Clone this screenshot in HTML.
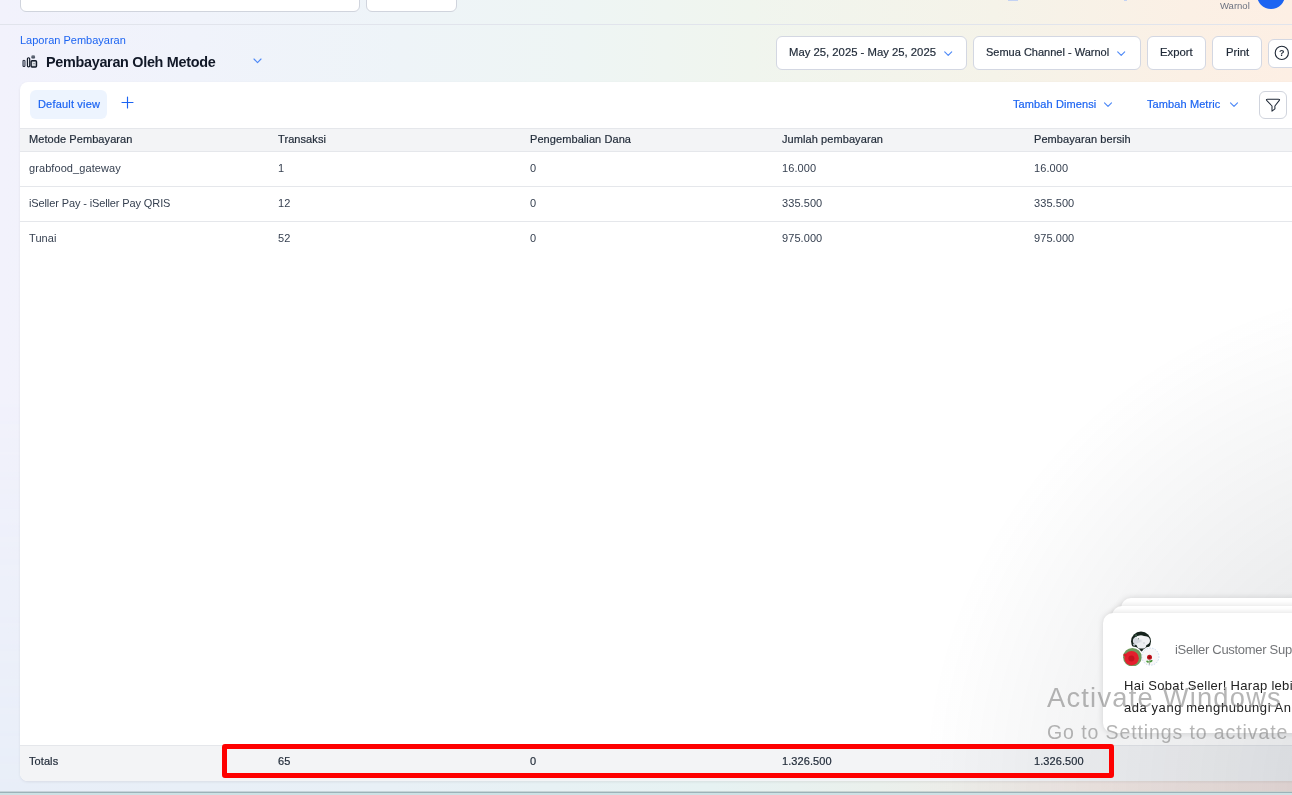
<!DOCTYPE html>
<html lang="id">
<head>
<meta charset="utf-8">
<title>Pembayaran Oleh Metode</title>
<style>
*{box-sizing:border-box;margin:0;padding:0}
html,body{width:1292px;height:795px;overflow:hidden}
body{position:relative;font-family:"Liberation Sans",sans-serif;color:#1f2937;
background:linear-gradient(90deg,#f2f2fc 0%,#f0f3fb 15%,#eef4f8 31%,#eef5f4 45%,#f0f5ee 58%,#f5f3e9 77%,#fbf0e5 92%,#fdefe4 100%);}
.abs{position:absolute}
.t{display:inline-block;will-change:transform}
svg{position:absolute;overflow:visible}
#topline{left:0;top:24px;width:1292px;height:1px;background:#e1e4ec}
.box{position:absolute;background:#fff;border:1px solid #d0d4dd;border-radius:6px}
#crumb{will-change:transform;left:20px;top:34px;font-size:11px;color:#1c64f2;line-height:13px;white-space:nowrap}
#title{will-change:transform;left:46px;top:53px;font-size:14.4px;font-weight:700;color:#111827;line-height:18px;white-space:nowrap;letter-spacing:-.3px}
.btn{position:absolute;top:36px;height:34px;background:#fff;border:1px solid #d3d7e2;border-radius:6px;font-size:11.3px;color:#1f2937;line-height:31px;white-space:nowrap;padding-left:12px;-webkit-text-stroke:.2px #1f2937}
#card{left:20px;top:82px;width:1290px;height:699px;background:#fff;border-radius:8px;box-shadow:0 1px 3px rgba(0,0,0,.08)}
#pill{left:10px;top:8px;width:77px;height:29px;border-radius:6px;background:#edf4fe;color:#1c64f2;font-size:11px;line-height:29px;text-align:center;padding-left:1px;letter-spacing:.18px;-webkit-text-stroke:.2px #1c64f2}
.lnk{will-change:transform;position:absolute;top:16px;font-size:11px;color:#1c64f2;line-height:13px;white-space:nowrap;letter-spacing:.1px;-webkit-text-stroke:.2px #1c64f2}
#thead{left:0;top:46px;width:1290px;height:24px;background:#f3f4f6;border-top:1px solid #e5e7eb;border-bottom:1px solid #e5e7eb}
.row{position:absolute;left:0;width:1290px;height:35px;border-bottom:1px solid #e5e7eb}
.c{will-change:transform;position:absolute;font-size:11px;line-height:13px;white-space:nowrap;color:#374151;letter-spacing:.08px}
.h{color:#1f2937;-webkit-text-stroke:.2px #1f2937}
#tfoot{left:0;top:663px;width:1290px;height:36px;background:#f3f4f6;border-top:1px solid #e5e7eb;border-radius:0 0 8px 8px}
#red{left:222px;top:744px;width:892px;height:34px;border:5px solid #fe0000;border-radius:3px}
.chat{position:absolute;background:#fff;border-radius:10px;box-shadow:0 0 6px rgba(0,0,0,.14)}
.wm{will-change:transform;position:absolute;white-space:nowrap;color:rgba(120,120,120,.55);font-family:"Liberation Sans",sans-serif}
</style>
</head>
<body>
<div class="abs" style="left:0;top:0;width:1292px;height:791px;background:linear-gradient(90deg,#e8eef8 0%,#e8f0f6 30%,#e6f2f2 55%,#eaf0ec 68%,#f3e9e5 85%,#f5e7e3 100%);-webkit-mask-image:linear-gradient(180deg,transparent 0,transparent 50%,#000 100%);mask-image:linear-gradient(180deg,transparent 0,transparent 50%,#000 100%)"></div>
<div class="box" style="left:20px;top:-20px;width:340px;height:32px"></div>
<div class="box" style="left:366px;top:-20px;width:91px;height:32px"></div>
<div class="abs" style="will-change:transform;left:1220px;top:0;font-size:9.5px;line-height:11px;color:#6b7280">Warnol</div>
<div class="abs" style="left:1257px;top:-19px;width:28px;height:28px;border-radius:50%;background:#1c64f2"></div>
<div class="abs" style="left:1008px;top:0;width:10px;height:1px;background:#c3d2f3"></div>
<div class="abs" style="left:1124px;top:0;width:3px;height:1px;background:#c3d2f3"></div>
<div class="abs" id="topline"></div>

<div class="abs" id="crumb">Laporan Pembayaran</div>
<svg style="left:22px;top:55px" width="16" height="13" viewBox="0 0 16 13">
  <rect x="0.1" y="4.8" width="3.7" height="7.3" rx="1.8" fill="#7c8190"/>
  <ellipse cx="1.95" cy="5.5" rx="1.2" ry=".6" fill="#111827" opacity=".75"/>
  <ellipse cx="1.95" cy="11.4" rx="1.2" ry=".6" fill="#111827" opacity=".75"/>
  <rect x="5.4" y="2.7" width="2.3" height="9.1" rx="1.15" fill="#e5e7eb" stroke="#111827" stroke-width="1.15"/>
  <rect x="9.1" y="5.7" width="5.4" height="6.3" rx="1" fill="#c9cdd5" stroke="#111827" stroke-width="1.4"/>
  <rect x="10.6" y="7.3" width="2.4" height="2.8" fill="#f3f4f6"/>
  <rect x="11.4" y="8" width="1.2" height="1.4" fill="#6b7280"/>
  <rect x="9.3" y="0.3" width="3.8" height="3.5" rx="1.4" fill="#6b7280"/>
  <path d="M9.6 2.2 H12.8" stroke="#374151" stroke-width=".8"/>
</svg>
<div class="abs" id="title">Pembayaran Oleh Metode</div>
<svg style="left:253px;top:58px" width="9" height="6" viewBox="0 0 9 6"><path d="M1 1 L4.5 4.6 L8 1" fill="none" stroke="#4f8af7" stroke-width="1.15" stroke-linecap="round" stroke-linejoin="round"/></svg>

<div class="btn" style="left:776px;width:191px"><span class="t">May 25, 2025 - May 25, 2025</span></div>
<svg style="left:944px;top:51px" width="9" height="6" viewBox="0 0 9 6"><path d="M0.7 0.8 L4.2 4.4 L7.7 0.8" fill="none" stroke="#4f8af7" stroke-width="1.15" stroke-linecap="round" stroke-linejoin="round"/></svg>
<div class="btn" style="left:973px;width:168px;font-size:11px;padding-left:12px"><span class="t">Semua Channel - Warnol</span></div>
<svg style="left:1117px;top:51px" width="9" height="6" viewBox="0 0 9 6"><path d="M0.7 0.8 L4.2 4.4 L7.7 0.8" fill="none" stroke="#4f8af7" stroke-width="1.15" stroke-linecap="round" stroke-linejoin="round"/></svg>
<div class="btn" style="left:1147px;width:59px"><span class="t">Export</span></div>
<div class="btn" style="left:1212px;width:50px;padding-left:12.5px"><span class="t">Print</span></div>
<div class="btn" style="left:1268px;top:39px;width:40px;height:29px"></div>
<svg style="left:1274px;top:45px;will-change:transform" width="16" height="16" viewBox="0 0 16 16">
  <circle cx="7.8" cy="7.9" r="6.6" fill="none" stroke="#1f2937" stroke-width="1.1"/>
  <text x="7.8" y="11.1" font-size="9" font-weight="700" text-anchor="middle" fill="#1f2937" font-family="Liberation Sans, sans-serif">?</text>
</svg>

<div class="abs" id="card">
  <div class="abs" id="pill"><span class="t">Default view</span></div>
  <svg style="left:101px;top:14px" width="13" height="13" viewBox="0 0 13 13"><path d="M6.5 1 V12 M1 6.5 H12" fill="none" stroke="#1c64f2" stroke-width="1.15" stroke-linecap="round"/></svg>
  <div class="lnk" style="left:993px">Tambah Dimensi</div>
  <svg style="left:1084px;top:20px" width="9" height="6" viewBox="0 0 9 6"><path d="M0.5 0.8 L4 4.4 L7.5 0.8" fill="none" stroke="#4f8af7" stroke-width="1.15" stroke-linecap="round" stroke-linejoin="round"/></svg>
  <div class="lnk" style="left:1127px">Tambah Metric</div>
  <svg style="left:1210px;top:20px" width="9" height="6" viewBox="0 0 9 6"><path d="M0.5 0.8 L4 4.4 L7.5 0.8" fill="none" stroke="#4f8af7" stroke-width="1.15" stroke-linecap="round" stroke-linejoin="round"/></svg>
  <div class="box" style="left:1239px;top:9px;width:28px;height:28px;border-radius:6px"></div>
  <svg style="left:1245px;top:16px" width="16" height="14" viewBox="0 0 16 14"><path d="M2.6 1.2 H13.4 Q15.3 1.2 14.1 2.7 L9.9 8 V10.8 L7 13.1 V8 L1.9 2.7 Q0.7 1.2 2.6 1.2 Z" fill="none" stroke="#1f2937" stroke-width="1.05" stroke-linejoin="round"/></svg>
  <div class="abs" id="thead">
    <div class="c h" style="left:9px;top:4px">Metode Pembayaran</div>
    <div class="c h" style="left:258px;top:4px">Transaksi</div>
    <div class="c h" style="left:510px;top:4px">Pengembalian Dana</div>
    <div class="c h" style="left:762px;top:4px">Jumlah pembayaran</div>
    <div class="c h" style="left:1014px;top:4px">Pembayaran bersih</div>
  </div>
  <div class="row" style="top:70px">
    <div class="c" style="left:9px;top:10px">grabfood_gateway</div>
    <div class="c" style="left:258px;top:10px">1</div>
    <div class="c" style="left:510px;top:10px">0</div>
    <div class="c" style="left:762px;top:10px">16.000</div>
    <div class="c" style="left:1014px;top:10px">16.000</div>
  </div>
  <div class="row" style="top:105px">
    <div class="c" style="left:9px;top:10px;letter-spacing:-.12px">iSeller Pay - iSeller Pay QRIS</div>
    <div class="c" style="left:258px;top:10px">12</div>
    <div class="c" style="left:510px;top:10px">0</div>
    <div class="c" style="left:762px;top:10px">335.500</div>
    <div class="c" style="left:1014px;top:10px">335.500</div>
  </div>
  <div class="row" style="top:140px;border-bottom:none">
    <div class="c" style="left:9px;top:10px">Tunai</div>
    <div class="c" style="left:258px;top:10px">52</div>
    <div class="c" style="left:510px;top:10px">0</div>
    <div class="c" style="left:762px;top:10px">975.000</div>
    <div class="c" style="left:1014px;top:10px">975.000</div>
  </div>
  <div class="abs" id="tfoot">
    <div class="c h" style="left:9px;top:9px">Totals</div>
    <div class="c h" style="left:258px;top:9px">65</div>
    <div class="c h" style="left:510px;top:9px">0</div>
    <div class="c h" style="left:762px;top:9px">1.326.500</div>
    <div class="c h" style="left:1014px;top:9px">1.326.500</div>
  </div>
</div>

<div class="abs" style="left:930px;top:291px;width:500px;height:500px;background:radial-gradient(ellipse at bottom right,rgba(29,39,54,.16) 0%,rgba(29,39,54,0) 72%)"></div>
<!-- chat widget -->
<div class="chat" style="left:1121px;top:598px;width:220px;height:120px"></div>
<div class="chat" style="left:1112px;top:606px;width:220px;height:120px"></div>
<div class="chat" style="left:1103px;top:613px;width:220px;height:120px"></div>
<svg style="left:1120px;top:628px" width="44" height="40" viewBox="1120 628 44 40">
  <defs><clipPath id="cb"><rect x="1120" y="628" width="44" height="38"/></clipPath>
  <clipPath id="ct"><circle cx="1141" cy="641.6" r="10"/></clipPath></defs>
  <circle cx="1141" cy="641.6" r="10" fill="#15231c"/>
  <g clip-path="url(#ct)">
    <ellipse cx="1141.3" cy="640.9" rx="8.5" ry="5.5" fill="#e3e6ea"/>
    <ellipse cx="1137" cy="640.4" rx="3.6" ry="3.2" fill="#d5d9df"/>
    <ellipse cx="1146" cy="640.4" rx="3.8" ry="3.8" fill="#f1f2f4"/>
    <ellipse cx="1141.6" cy="645.4" rx="4.6" ry="3.2" fill="#eceef1"/>
    <ellipse cx="1140.5" cy="637.4" rx="4" ry="2" fill="#f4f5f6"/>
    <circle cx="1134.2" cy="644.6" r="1.2" fill="#b9c0c8"/>
    <circle cx="1136" cy="635.4" r="1.2" fill="#3b5a45"/>
    <circle cx="1138.4" cy="638.8" r=".7" fill="#7d9084"/>
    <circle cx="1144" cy="643" r=".8" fill="#c3c9d0"/>
    
  </g>
  <g clip-path="url(#cb)">
    <circle cx="1132.4" cy="657.2" r="10.6" fill="#fff"/>
    <circle cx="1150.4" cy="656.6" r="10" fill="#fff"/>
    <circle cx="1132.4" cy="657.2" r="9.3" fill="#6f9a5e"/>
    <circle cx="1131.6" cy="658.2" r="7.2" fill="#e31f2d"/>
    <circle cx="1131.4" cy="658.6" r="3" fill="#c4121f"/>
    <circle cx="1125" cy="655" r="1.6" fill="#d81c28"/>
    <circle cx="1150.4" cy="656.6" r="8.6" fill="#f7f7f8" stroke="#a8c3e6" stroke-width=".6" stroke-dasharray="1.4 1.4"/>
    <circle cx="1149.5" cy="657.3" r="2.5" fill="#c3141d"/>
    <circle cx="1149.5" cy="657.3" r="1.1" fill="#8e0a12"/>
    <path d="M1149.4 659.8 V664.6" stroke="#8a9a7a" stroke-width=".8" fill="none"/>
    <ellipse cx="1147.6" cy="661.6" rx="1.5" ry=".9" fill="#4c9a3c" transform="rotate(25 1147.6 661.6)"/>
    <ellipse cx="1151.1" cy="661.2" rx="1.7" ry="1" fill="#3f8f33" transform="rotate(-30 1151.1 661.2)"/>
  </g>
</svg>
<div class="abs" style="will-change:transform;left:1174.5px;top:641.5px;font-size:13px;line-height:16px;color:#737578;white-space:nowrap;letter-spacing:-.3px">iSeller Customer Support</div>
<div class="abs" style="will-change:transform;left:1123.7px;top:674.7px;font-size:13px;line-height:22px;color:#222;white-space:nowrap;letter-spacing:.3px">Hai Sobat Seller! Harap lebih berhati-hati jika</div>
<div class="abs" style="will-change:transform;left:1123.7px;top:696.8px;font-size:13px;line-height:22px;color:#222;white-space:nowrap;letter-spacing:.56px">ada yang menghubungi Anda</div>

<div class="abs" id="red"></div>

<div class="wm" style="left:1047px;top:681px;font-size:27.3px;line-height:34px;letter-spacing:1.22px">Activate Windows</div>
<div class="wm" style="left:1047px;top:720px;font-size:19.5px;line-height:24px;letter-spacing:.9px">Go to Settings to activate Windows.</div>

<div class="abs" style="left:0;top:791px;width:1292px;height:1px;background:rgba(150,172,178,.45)"></div>
<div class="abs" style="left:0;top:792px;width:1292px;height:1px;background:#9cb2b8"></div>
<div class="abs" style="left:0;top:793px;width:1292px;height:2px;background:#cde1e4"></div>
</body>
</html>
